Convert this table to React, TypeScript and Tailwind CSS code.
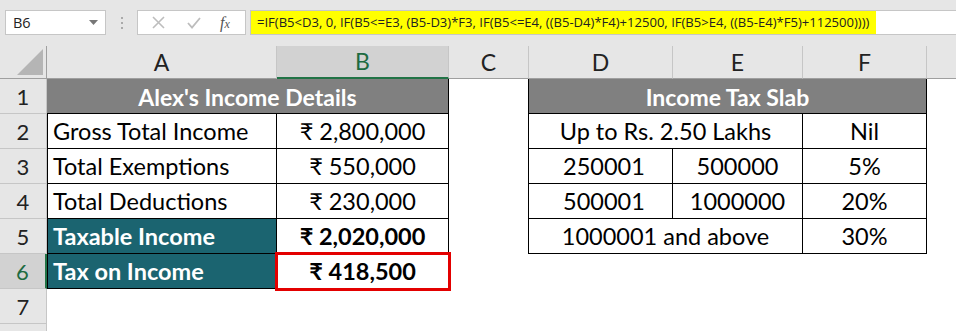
import React from "react";

const F = { fontFamily: "Lato, 'Noto Sans', 'DejaVu Sans', sans-serif" };

function RowHead({ n, sel }: { n: string; sel?: boolean }) {
  return (
    <div
      className={`flex items-center justify-center border-r border-b border-[#c6c6c6] text-[22px] ${
        sel ? "bg-[#d2d2d2] text-[#1e6b41] border-r-[#217346] border-r-2" : "bg-[#e6e6e6] text-[#222]"
      }`}
    >
      {n}
    </div>
  );
}

function ColHead({ c, sel }: { c: string; sel?: boolean }) {
  return (
    <div
      className={`flex items-center justify-center text-[23px] border-r border-[#c6c6c6] ${
        sel ? "bg-[#d2d2d2] text-[#1e6b41] border-b-2 border-b-[#217346]" : "bg-[#e6e6e6] text-[#222] border-b border-b-[#9f9f9f]"
      }`}
    >
      {c}
    </div>
  );
}

export default function App() {
  const cell = "flex items-center pt-[2px] border-r border-b border-black text-[23.5px] text-black";
  return (
    <div className="w-[956px] h-[331px] overflow-hidden bg-white" style={F}>
      {/* Toolbar / formula bar */}
      <div className="h-[46px] bg-[#e6e6e6] flex items-start pt-[10px]">
        <div className="ml-[5px] w-[101px] h-[25px] bg-white border border-[#c6c6c6] flex items-center justify-between px-[7px]">
          <span className="text-[14.5px] text-[#222]" style={{ fontFamily: "'Open Sans', sans-serif" }}>B6</span>
          <svg width="9" height="6" viewBox="0 0 9 6">
            <path d="M0 0 L9 0 L4.5 5 Z" fill="#777" />
          </svg>
        </div>
        <div className="w-[31px] h-[25px] flex flex-col items-center justify-center gap-[3px]">
          <div className="w-[2px] h-[2px] bg-[#aaa]" />
          <div className="w-[2px] h-[2px] bg-[#aaa]" />
          <div className="w-[2px] h-[2px] bg-[#aaa]" />
        </div>
        <div className="w-[109px] h-[25px] bg-white border border-[#c6c6c6] flex items-center pl-[14px]">
          <svg width="13" height="13" viewBox="0 0 13 13">
            <path d="M1 1 L12 12 M12 1 L1 12" stroke="#bdbdbd" strokeWidth="1.6" />
          </svg>
          <svg className="ml-[22px]" width="14" height="12" viewBox="0 0 14 12">
            <path d="M1 6 L5 10.5 L13 1" stroke="#bdbdbd" strokeWidth="1.8" fill="none" />
          </svg>
          <span
            className="ml-[19px] text-[16px] italic text-[#555]"
            style={{ fontFamily: "'Liberation Serif', serif" }}
          >
            f<span className="text-[12px]">x</span>
          </span>
        </div>
        <div className="ml-[4px] flex-1 h-[25px] bg-white border border-[#c6c6c6] border-r-0 flex items-center">
          <div
            className="h-full bg-[#ffff00] flex items-center pl-[6px] pr-[7px] text-[13.05px] text-[#222] whitespace-nowrap"
            style={{ fontFamily: "'Open Sans', sans-serif" }}
          >
            =IF(B5&lt;D3, 0, IF(B5&lt;=E3, (B5-D3)*F3, IF(B5&lt;=E4, ((B5-D4)*F4)+12500, IF(B5&gt;E4, ((B5-E4)*F5)+112500))))
          </div>
        </div>
      </div>

      {/* Sheet grid */}
      <div className="grid grid-cols-[47px_230px_172px_80px_144px_130px_124px_1fr] grid-rows-[33px_35px_35px_35px_35px_35px_35px_35px_1fr] h-[285px]">
        {/* header row */}
        <div className="relative bg-[#e6e6e6] border-r border-b border-[#9f9f9f]">
          <svg className="absolute right-[3px] bottom-[3px]" width="26" height="26" viewBox="0 0 26 26">
            <path d="M26 0 L26 26 L0 26 Z" fill="#b5b5b5" />
          </svg>
        </div>
        <ColHead c="A" />
        <ColHead c="B" sel />
        <ColHead c="C" />
        <ColHead c="D" />
        <ColHead c="E" />
        <ColHead c="F" />
        <div className="bg-[#e6e6e6] border-b border-[#9f9f9f]" />

        {/* Row 1 */}
        <RowHead n="1" />
        <div className="col-span-2 flex items-center justify-center pt-[2px] bg-[#808080] text-white font-bold text-[23px] border-r border-b border-black">
          Alex's Income Details
        </div>
        <div className="border-r border-black" />
        <div className="col-span-3 flex items-center justify-center pt-[2px] bg-[#808080] text-white font-bold text-[23px] border-r border-b border-black">
          Income Tax Slab
        </div>
        <div />

        {/* Row 2 */}
        <RowHead n="2" />
        <div className={`${cell} border-l pl-[5px]`}>Gross Total Income</div>
        <div className={`${cell} justify-center`}>₹ 2,800,000</div>
        <div className="border-r border-black" />
        <div className={`${cell} col-span-2 justify-center`}>Up to Rs. 2.50 Lakhs</div>
        <div className={`${cell} justify-center`}>Nil</div>
        <div />

        {/* Row 3 */}
        <RowHead n="3" />
        <div className={`${cell} border-l pl-[5px]`}>Total Exemptions</div>
        <div className={`${cell} justify-center`}>₹ 550,000</div>
        <div className="border-r border-black" />
        <div className={`${cell} pl-[34px]`}>250001</div>
        <div className={`${cell} justify-center`}>500000</div>
        <div className={`${cell} justify-center`}>5%</div>
        <div />

        {/* Row 4 */}
        <RowHead n="4" />
        <div className={`${cell} border-l pl-[5px]`}>Total Deductions</div>
        <div className={`${cell} justify-center`}>₹ 230,000</div>
        <div className="border-r border-black" />
        <div className={`${cell} pl-[34px]`}>500001</div>
        <div className={`${cell} justify-center`}>1000000</div>
        <div className={`${cell} justify-center`}>20%</div>
        <div />

        {/* Row 5 */}
        <RowHead n="5" />
        <div className={`${cell} border-l pl-[5px] bg-[#1b6470] text-white font-bold`}>Taxable Income</div>
        <div className={`${cell} justify-center font-bold`}>₹ 2,020,000</div>
        <div className="border-r border-black" />
        <div className={`${cell} col-span-2 justify-center`}>1000001 and above</div>
        <div className={`${cell} justify-center`}>30%</div>
        <div />

        {/* Row 6 */}
        <RowHead n="6" sel />
        <div className={`${cell} border-l pl-[5px] bg-[#1b6470] text-white font-bold`}>Tax on Income</div>
        <div className={`${cell} justify-center font-bold relative`}>
          ₹ 418,500
          <div className="absolute left-[-2px] top-[-2px] right-[-3px] bottom-[-3px] border-[3px] border-[#e30000]" />
        </div>
        <div />
        <div />
        <div />
        <div />
        <div />

        {/* Row 7 */}
        <RowHead n="7" />
        <div className="col-span-7" />

        {/* Row 8 (cut off at the bottom edge) */}
        <div className="bg-[#e6e6e6] border-r border-[#c6c6c6]" />
        <div className="col-span-7" />
      </div>
    </div>
  );
}
